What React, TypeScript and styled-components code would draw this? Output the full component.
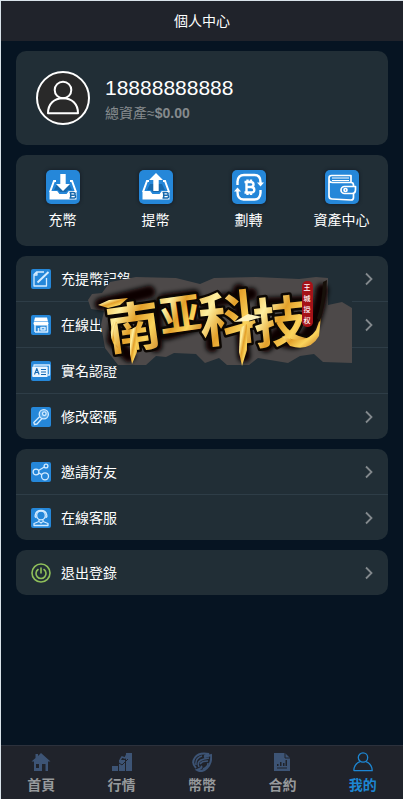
import React from 'react';
import styled, { createGlobalStyle } from 'styled-components';

const GlobalStyle = createGlobalStyle`
  *, *::before, *::after { box-sizing: border-box; }
  body {
    margin: 0;
    background: #061422;
    color: #fff;
    font-family: "Liberation Sans", "Noto Sans CJK TC", sans-serif;
    font-size: 14px;
  }
  a { color: inherit; text-decoration: none; }
  svg { display: block; flex: none; }
`;

const Page = styled.div`
  display: flex;
  flex-direction: column;
  min-height: 100vh;
  border-top: 1px solid #d9e3ea;
  border-left: 1px solid #d9e3ea;
`;

const Header = styled.header`
  display: flex;
  align-items: center;
  justify-content: center;
  height: 40px;
  background: #20232b;
`;

const Title = styled.h1`
  margin: 0;
  padding-bottom: 2px;
  font-size: 14px;
  font-weight: 400;
`;

const Content = styled.main`
  flex: 1;
  display: flex;
  flex-direction: column;
  gap: 10px;
  padding: 10px 15px;
`;

const Card = styled.section`
  position: relative;
  background: #212e36;
  border-radius: 10px;
`;

const Profile = styled(Card)`
  display: flex;
  align-items: center;
  gap: 15px;
  padding: 20px;
`;

const Phone = styled.div`
  font-size: 21px;
  line-height: 30px;
`;

const Assets = styled.div`
  line-height: 20px;
  color: #858a8d;
`;

const Actions = styled(Card)`
  display: grid;
  grid-template-columns: repeat(4, 1fr);
  padding: 15px 0 16px;
`;

const Action = styled.a`
  display: flex;
  flex-direction: column;
  align-items: center;
  gap: 6px;
  line-height: 20px;
  svg { border-radius: 5px; box-shadow: 0 0 3px 1px #18212a; }
`;

const Row = styled.a`
  display: flex;
  align-items: center;
  gap: 10px;
  height: 45px;
  padding: 0 15px;
  & + & { height: 46px; border-top: 1px solid #2e3d47; }
`;

const RowLabel = styled.span`
  flex: 1;
  padding-bottom: 2px;
`;

const Watermark = styled.svg`
  position: absolute;
  left: 68px;
  top: 14px;
  pointer-events: none;
`;

const TabBar = styled.nav`
  display: grid;
  grid-template-columns: repeat(5, 1fr);
  padding: 6px 0 5px;
  background: #20232b;
  border-top: 1px solid #2c313c;
`;

const Tab = styled.a<{ $active?: boolean }>`
  display: flex;
  flex-direction: column;
  align-items: center;
  gap: 4px;
  font-weight: 700;
  line-height: 18px;
  color: ${(p) => (p.$active ? '#1d86d2' : '#96999c')};
`;

const BLUE = '#2587d9';
const PALE = '#d3ebff';

const Avatar = () => (
  <svg width="54" height="54" viewBox="0 0 54 54" fill="none" stroke="#fff" strokeWidth="2">
    <circle cx="27" cy="27" r="26" fill="#292929" />
    <circle cx="27" cy="19" r="8.3" />
    <path d="M12 42.3C12 33 18 27.3 27 27.3S42 33 42 42.3Z" strokeLinejoin="round" />
  </svg>
);

const Tray = ({ up }: { up?: boolean }) => (
  <svg width="34" height="34" viewBox="0 0 34 34">
    <rect width="34" height="34" fill={BLUE} />
    <path d="M10 11H8L4 22M24 11h2l4 11" fill="none" stroke="#fff" strokeWidth="2" />
    <path d="M3.5 21h7.7l2.2 3h7.2l2.2-3h7.7v8.5h-27Z" fill="#fff" />
    <path d="M8 20 11 14h12l3 6h-4l-2 2h-6l-2-2Z" fill="#1769ad" />
    {up ? (
      <path d="M17 3 24 10h-4.3v11h-5.4V10H10Z" fill="#fff" />
    ) : (
      <path d="M14.3 4h5.4v10H24l-7 7-7-7h4.3Z" fill="#fff" />
    )}
    <path d="M23.5 22.5h3.7q2 0 2 1.2t-1.1 1.3q1.5.1 1.5 1.4 0 1.6-2.3 1.6h-3.8M24.7 22.5V28M25 25.2h3" fill="none" stroke="#1769ad" strokeWidth="1.5" />
  </svg>
);

const Transfer = () => (
  <svg width="34" height="34" viewBox="0 0 34 34" fill="none" stroke="#fff" strokeWidth="2.4">
    <rect width="34" height="34" fill={BLUE} stroke="none" />
    <path d="M5.5 15v-3.5Q6 5 12 5h10.500Q28.500 5 28.500 12v2M28.500 20v3q-.500 6.500-6 6.500h-11Q5.500 29.500 5.500 22v-2" />
    <path d="m25 12.500 3.500 4 3.500-4ZM2 21.500l3.500-4 3.500 4Z" fill="#fff" stroke="none" />
    <path d="M12.500 12h6q3 0 3 2.500T18.500 17H14h5q3.300 0 3.300 2.800T19 22.500h-6.500M14.500 12v10.500M15.500 9.500V12M19 9.500V12M15.500 22.500V25M19 22.500V25" />
  </svg>
);

const Wallet = () => (
  <svg width="34" height="34" viewBox="0 0 34 34" fill="none" stroke="#fff" strokeWidth="1.7" strokeLinejoin="round">
    <rect width="34" height="34" fill={BLUE} stroke="none" />
    <path d="M6.500 5.500H26v7M6.500 5.500Q4 5.500 4 8.200V26q0 3 3 3l19 1q2.500 0 2.500-2.500V23M4 9q0 3.500 3.500 3.500H26q2.500 0 2.500 2.500v2" />
    <path d="M7 8h17M7 10.500h17" strokeWidth="1.200" />
    <path d="M30.500 16.500h-11a3.500 3.500 0 0 0 0 7H27q3.500 0 3.500-4Z" fill={BLUE} />
    <circle cx="20.500" cy="20" r="1.500" />
  </svg>
);

const Tile = ({ children }: { children: React.ReactNode }) => (
  <svg width="20" height="20" viewBox="0 0 20 20" fill="none" stroke={PALE} strokeWidth="1.300" strokeLinejoin="round">
    <rect width="20" height="20" rx="2" fill={BLUE} stroke="none" />
    {children}
  </svg>
);

const RecordIcon = () => (
  <Tile>
    <path d="M15.500 9v8H3V5.500L5.500 3H13M3 6h3V3" />
    <path d="M6.500 13.500 17.500 3" strokeWidth="2" />
  </Tile>
);

const ShopIcon = () => (
  <Tile>
    <path d="M4 2.500h12l1.500 6q0 2-2 2h-11q-2 0-2-2Z" fill="#fff" stroke="none" />
    <path d="M3 6.500h14" stroke="#83bdf0" strokeWidth="1" />
    <path d="M4 10v7M7.500 13v4M4 17h12.500v-7M10 12.500h4V15H10Z" strokeWidth="1.600" />
  </Tile>
);

const IdIcon = () => (
  <Tile>
    <path d="M3 5.500V4h15.500v10H17" />
    <rect x="1.200" y="5.500" width="15.500" height="10.500" rx="1" fill="#e9f5ff" stroke="none" />
    <path d="m3.500 13.500 2.300-6 2.300 6M4.500 11.500h2.700M10 8.500h5M10 11h5M10 13.500h5" stroke="#176ab3" strokeWidth="1.100" />
  </Tile>
);

const KeyIcon = () => (
  <Tile>
    <circle cx="12.800" cy="7.200" r="4.600" fill="#5aa8e8" />
    <circle cx="13.300" cy="6.700" r="1.800" fill={BLUE} />
    <path d="m8.800 9.500-6 6L3.500 17.500l2.500-.500 5-5.500" />
  </Tile>
);

const ShareIcon = () => (
  <Tile>
    <circle cx="5" cy="10" r="2.900" />
    <circle cx="15" cy="4" r="1.900" />
    <circle cx="14" cy="14.300" r="3.500" />
    <path d="m7.500 8.500 5.800-3.500M7.800 11l3 1.600" />
  </Tile>
);

const ServiceIcon = () => (
  <Tile>
    <circle cx="10" cy="7.500" r="4.300" />
    <path d="M5.500 9.500q-2-.500-1.200-2.500Q5 2.500 10 2.500t5.700 4.500q.8 2-1.200 2.500M8 11.500v2L3 15.500V17.500h14v-2l-5-2v-2M8.500 14l1.500 1 1.500-1" />
  </Tile>
);

const PowerIcon = () => (
  <svg width="20" height="20" viewBox="0 0 20 20" fill="none" stroke="#8fbf5a" strokeWidth="1.600" strokeLinecap="round">
    <circle cx="10" cy="10" r="9" />
    <path d="M10 5v5M7 6.500a5 5 0 1 0 6 0" />
  </svg>
);

const Chevron = () => (
  <svg width="8" height="14" viewBox="0 0 8 14" fill="none" stroke="#83898d" strokeWidth="1.800">
    <path d="m1 1.500 5.500 5.500L1 12.500" />
  </svg>
);

const LogoArt = () => (
  <Watermark width="270" height="98" viewBox="0 0 270 98" role="img" aria-label="南亚科技">
    <defs>
      <linearGradient id="gold" x1="0" y1="0" x2="1" y2="1">
        <stop offset="0" stopColor="#e9a526" />
        <stop offset="0.300" stopColor="#fff0a0" />
        <stop offset="0.500" stopColor="#e3a02a" />
        <stop offset="0.700" stopColor="#fbd45c" />
        <stop offset="1" stopColor="#bd6a18" />
      </linearGradient>
      <filter id="soot" x="-20%" y="-20%" width="140%" height="140%">
        <feGaussianBlur stdDeviation="2" />
      </filter>
    </defs>
    <path d="M24 9H268V96H20V58H16V31H24Z" fill="#212e36" />
    <path d="M4 30 8 24 18 23 26 12 52 7 92 8 116 14 130 8 172 7 215 9 232 7 244 8 244 35 258 32 268 38V93L239 92 230 84 216 86 204 93 174 88 165 95H143L135 88 121 93 112 84 90 83 82 87 72 86 62 95H34L21 78 17 55 20 41 7 39Z" fill="#4d4949" />
    <g fill="none" stroke="#080604" strokeLinecap="round" strokeLinejoin="round" filter="url(#soot)">
      <path d="M17 34 65 22M34 44 29 70 45 86M72 36 72 76M80 30 110 26M82 64 116 54M122 33 167 24M127 45 128 76M155 20 160 86M178 34 220 32M182 76 209 50M198 70Q228 84 238 20" strokeWidth="13" />
    </g>
    <g fontFamily="'Noto Sans CJK SC', sans-serif" fontWeight="700" fill="url(#gold)" stroke="#0c0703" strokeWidth="5" paintOrder="stroke" strokeLinejoin="round">
      <text x="22" y="77" fontSize="54" transform="rotate(-8 48 54)">南</text>
      <text x="75" y="60" fontSize="42" transform="rotate(-8 94 44)">亚</text>
      <text x="115" y="70" fontSize="58" transform="rotate(-6 144 48)">科</text>
      <text x="169" y="72" fontSize="54" transform="rotate(-6 194 50)">技</text>
    </g>
    <g fill="url(#gold)">
      <path d="M14 35 25 30 44 28 36 35 24 38Z" />
      <path d="M46 60 53 56 53 82 48 94 46 84Z" />
      <path d="M156 58 163 54 163 80 158 96 155 82Z" />
      <path d="M198 66Q222 76 232 60L237 46 235 66Q226 82 206 76Z" />
      <path d="M33 52Q26 64 34 78L29 73Q24 62 30 51Z" />
    </g>
    <path d="M236 52Q241 34 243 10L239 12Q238 34 233 48Z" fill="#17100a" />
    <path d="M150 52 164 44 178 47 164 51Z" fill="#fff3bd" />
    <rect x="218" y="11" width="11" height="46" rx="5" fill="#a51218" />
    <g fontFamily="'Noto Sans CJK SC', sans-serif" fontSize="7" fontWeight="500" fill="#fff" textAnchor="middle">
      <text x="223" y="20">王</text>
      <text x="223" y="31">城</text>
      <text x="223" y="42">授</text>
      <text x="223" y="53">权</text>
    </g>
  </Watermark>
);

const MUTED = '#3d5475';

const HomeIcon = () => (
  <svg width="20" height="20" viewBox="0 0 20 20" fill={MUTED}>
    <path d="M10 1 19.500 9.500H17V19H3V9.500H.500L4.500 6V2H7v2Z" />
    <path d="M5 12h3v4H5ZM11 12h3.500v7H11Z" fill="#20232b" />
  </svg>
);

const MarketIcon = () => (
  <svg width="20" height="20" viewBox="0 0 20 20" fill={MUTED}>
    <path d="M0 14h6v5H0ZM7 8h6v11H7ZM14 1h6v18h-6Z" />
    <path d="m7 11 3 2 6-6" fill="none" stroke="#20232b" />
    <path d="m8 8 2-3 3 1 2-4" fill="none" stroke={MUTED} strokeWidth="1.500" />
  </svg>
);

const CoinIcon = () => (
  <svg width="20" height="20" viewBox="0 0 20 20" fill="none" stroke={MUTED} strokeWidth="2">
    <path d="M4 16Q-1 11 3 5.500T17 2Q12 3 13 5L19 3Q20 11 15 16T5 18Q11 16 9 14" />
    <path d="M4 13Q3 6 10 4M7 15Q4 9 12 7L17 6M8 12q2-3 8-3M11 17q5-2 5-6" strokeWidth="1.500" />
  </svg>
);

const ContractIcon = () => (
  <svg width="20" height="20" viewBox="0 0 20 20" fill={MUTED}>
    <path d="M2 1h11l5 5v13H2Z" />
    <path d="M13 1v5h5M5 16h10" fill="none" stroke="#20232b" />
    <path d="M5 12h1.500v2H5ZM8 10h1.500v4H8ZM11 11h1.500v3H11ZM13.500 8H15v6h-1.500Z" fill="#20232b" />
  </svg>
);

const MeIcon = () => (
  <svg width="20" height="20" viewBox="0 0 20 20" fill="none" stroke="#1d86d2" strokeWidth="1.300">
    <circle cx="10" cy="5.500" r="4.700" />
    <path d="M.8 18.700Q1 12 7 9.700M13 9.700q6 2.300 6.200 9H.8" strokeLinejoin="round" />
  </svg>
);

type Item = { label: string; icon: React.ReactNode; plain?: boolean };

const actions: Item[] = [
  { label: '充幣', icon: <Tray /> },
  { label: '提幣', icon: <Tray up /> },
  { label: '劃轉', icon: <Transfer /> },
  { label: '資產中心', icon: <Wallet /> },
];

const account: Item[] = [
  { label: '充提幣記錄', icon: <RecordIcon /> },
  { label: '在線出售', icon: <ShopIcon /> },
  { label: '實名認證', icon: <IdIcon />, plain: true },
  { label: '修改密碼', icon: <KeyIcon /> },
];

const support: Item[] = [
  { label: '邀請好友', icon: <ShareIcon /> },
  { label: '在線客服', icon: <ServiceIcon /> },
];

const session: Item[] = [{ label: '退出登錄', icon: <PowerIcon /> }];

const tabs: Item[] = [
  { label: '首頁', icon: <HomeIcon /> },
  { label: '行情', icon: <MarketIcon /> },
  { label: '幣幣', icon: <CoinIcon /> },
  { label: '合約', icon: <ContractIcon /> },
  { label: '我的', icon: <MeIcon /> },
];

const Menu = ({ items, children }: { items: Item[]; children?: React.ReactNode }) => (
  <Card>
    {items.map((item) => (
      <Row href="#" key={item.label}>
        {item.icon}
        <RowLabel>{item.label}</RowLabel>
        {!item.plain && <Chevron />}
      </Row>
    ))}
    {children}
  </Card>
);

export default function App() {
  return (
    <Page>
      <GlobalStyle />
      <Header>
        <Title>個人中心</Title>
      </Header>
      <Content>
        <Profile>
          <Avatar />
          <div>
            <Phone>18888888888</Phone>
            <Assets>
              總資產≈<b>$0.00</b>
            </Assets>
          </div>
        </Profile>
        <Actions>
          {actions.map((item) => (
            <Action href="#" key={item.label}>
              {item.icon}
              {item.label}
            </Action>
          ))}
        </Actions>
        <Menu items={account}>
          <LogoArt />
        </Menu>
        <Menu items={support} />
        <Menu items={session} />
      </Content>
      <TabBar>
        {tabs.map((item) => (
          <Tab href="#" key={item.label} $active={item.label === '我的'}>
            {item.icon}
            {item.label}
          </Tab>
        ))}
      </TabBar>
    </Page>
  );
}
